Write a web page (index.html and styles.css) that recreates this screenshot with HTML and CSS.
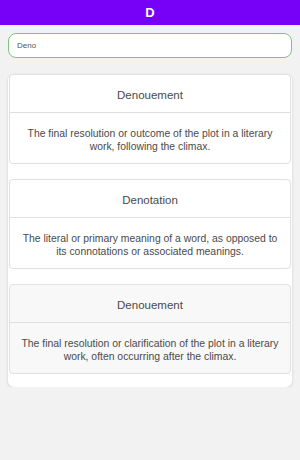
FILE: index.html
```html
<!DOCTYPE html>
<html>
<head>
    <meta name="viewport" content="width=device-width, initial-scale=1.0">
    <link rel="stylesheet" href="styles.css">
</head>
<body>
    <div class="header">D</div>
    <div class="search">
        <input class="search-input" type="text" value="Deno">
    </div>
    <div class="results">
        <div class="card">
            <div class="card-title">Denouement</div>
            <div class="card-text">The final resolution or outcome of the plot in a literary work, following the climax.</div>
        </div>
        <div class="card">
            <div class="card-title">Denotation</div>
            <div class="card-text">The literal or primary meaning of a word, as opposed to its connotations or associated meanings.</div>
        </div>
        <div class="card card-active">
            <div class="card-title">Denouement</div>
            <div class="card-text">The final resolution or clarification of the plot in a literary work, often occurring after the climax.</div>
        </div>
    </div>
</body>
</html>
```

FILE: styles.css
```css
* {
    margin: 0;
    padding: 0;
    box-sizing: border-box;
}

body {
    background: #f2f2f2;
    font-family: "Liberation Sans", Arial, sans-serif;
}

.header {
    height: 25px;
    background: #7700f6;
    color: #fff;
    font-size: 13px;
    font-weight: bold;
    display: flex;
    justify-content: center;
    align-items: center;
}

.search {
    padding: 8px 8px 16px;
}

.search-input {
    width: 100%;
    height: 25px;
    border: 1px solid #7cc47c;
    border-radius: 8px;
    padding: 0 8px;
    font-family: inherit;
    font-size: 8px;
    color: #555;
    background: #fff;
    outline: none;
}

.results {
    margin: 0 8px;
    background: #fff;
    border-radius: 6px;
    box-shadow: 0 1px 3px rgba(0, 0, 0, 0.15);
    padding: 0 1px 13px;
    display: flex;
    flex-direction: column;
    gap: 15px;
}

.card {
    border: 1px solid #e0e0e0;
    border-radius: 4px;
    background: #fff;
    color: #4a4a4a;
}

.card-active {
    background: #f8f8f8;
}

.card-title {
    padding: 13px 10px 10px;
    font-size: 11.5px;
    line-height: 14px;
    text-align: center;
    border-bottom: 1px solid #e0e0e0;
}

.card-text {
    padding: 14px 10px 10px;
    font-size: 10.4px;
    line-height: 13px;
    text-align: center;
}
```
